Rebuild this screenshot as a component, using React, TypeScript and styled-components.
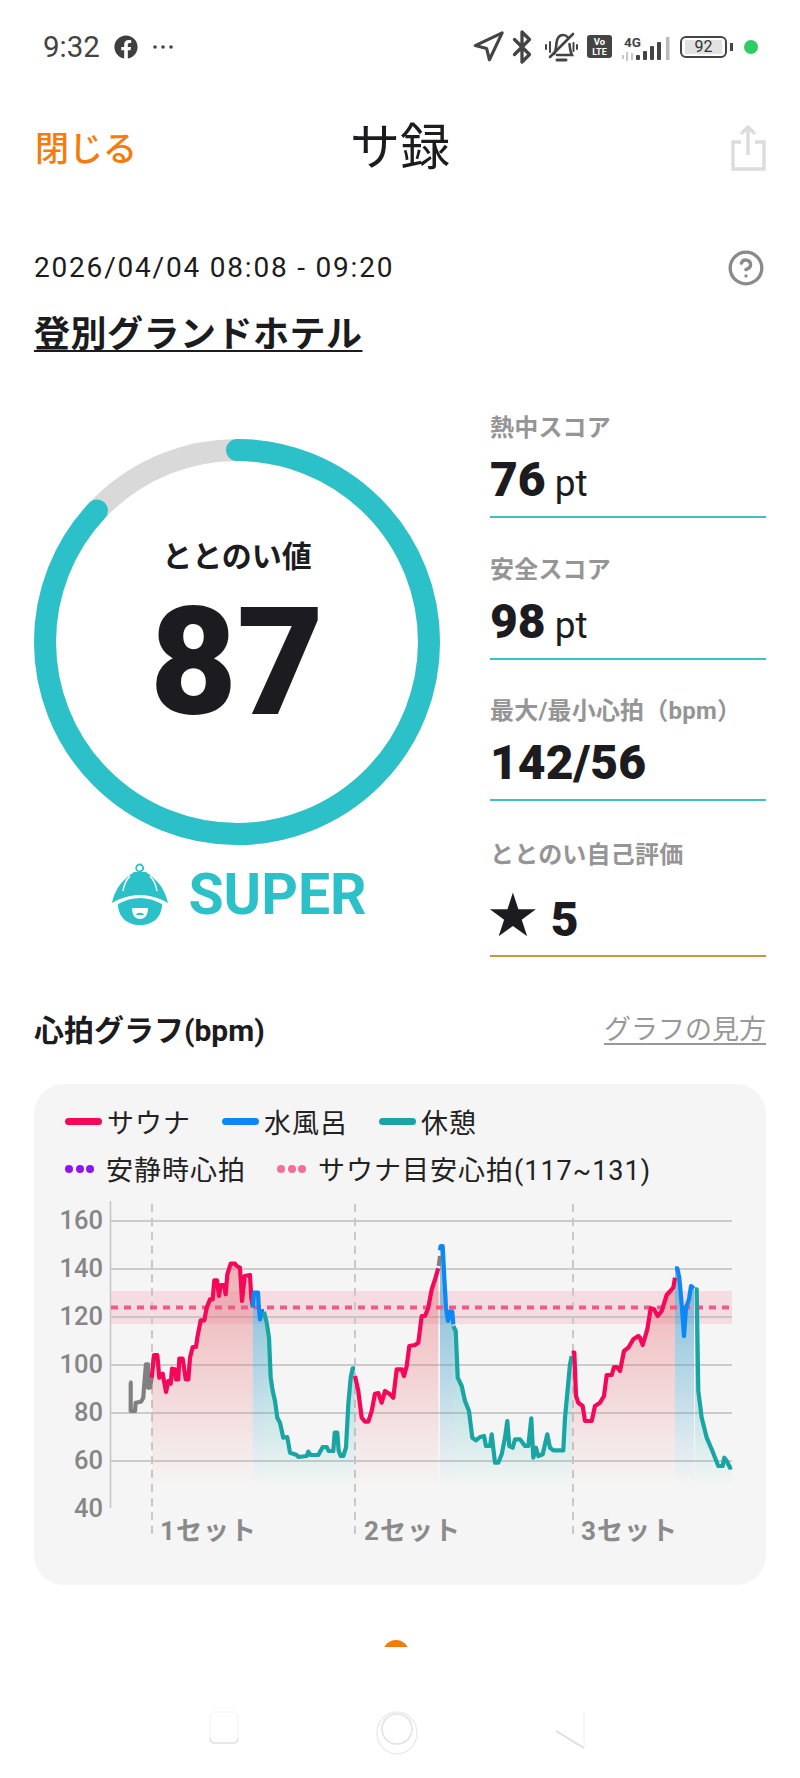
import React from 'react';
import styled, {createGlobalStyle} from 'styled-components';
import {Bluetooth, CircleHelp, Navigation} from 'lucide-react';
import {FaFacebook} from 'react-icons/fa';

const GlobalStyle = createGlobalStyle`
  html, body {
    margin: 0;
    background: #fff;
  }

  body {
    width: 800px;
    height: 1778px;
    overflow: hidden;
    font-family: Roboto, "Noto Sans CJK JP", sans-serif;
    color: #1c1c20;
  }
`;

const TEAL = '#2cc1c8';

type Pt = [number, number];

// traced from the chart; left and right halves were read from separate crops
const L = (pts: Pt[]): Pt[] => pts.map(([x, y]) => [40 + x / 3, 1190 + y / 3]);
const R = (pts: Pt[]): Pt[] => pts.map(([x, y]) => [390 + x / 3, 1190 + y / 3]);

const LINE = {sauna: '#f5075a', water: '#0d87f5', rest: '#1aa5a5', none: '#808080'};
type Kind = keyof typeof LINE;

const segments: { kind: Kind; pts: Pt[] }[] = [
    {kind: 'none', pts: L([[268, 575], [272, 575], [272, 660], [285, 660], [287, 635], [303, 632], [310, 620], [312, 590], [318, 520], [324, 520], [324, 590], [330, 590], [335, 560]])},
    {kind: 'sauna', pts: L([[335, 560], [342, 492], [352, 492], [358, 560], [368, 548], [378, 603], [385, 570], [392, 578], [396, 533], [405, 535], [408, 565], [415, 565], [418, 503], [428, 503], [437, 565], [445, 565], [450, 500], [458, 468], [468, 468], [472, 440], [482, 388], [493, 388], [500, 350], [510, 325], [518, 325], [523, 268], [531, 268], [537, 315], [542, 282], [552, 282], [557, 310], [562, 250], [572, 218], [585, 218], [590, 225], [600, 230], [606, 330], [614, 255], [630, 252], [634, 320], [638, 345]])},
    {kind: 'water', pts: L([[638, 350], [642, 305], [654, 305], [656, 345], [660, 385], [665, 360], [672, 360]])},
    {kind: 'rest', pts: L([[672, 362], [680, 395], [687, 440], [692, 560], [698, 600], [705, 630], [712, 680], [720, 695], [730, 740], [742, 738], [750, 785], [770, 792], [775, 798], [800, 795], [805, 782], [812, 792], [835, 792], [848, 768], [860, 768], [866, 780], [880, 780], [884, 725], [892, 725], [896, 780], [902, 795], [910, 795], [918, 770], [925, 640], [932, 560], [938, 532], [945, 532]])},
    {kind: 'sauna', pts: [...L([[945, 555], [955, 600], [965, 680], [975, 692], [985, 692], [995, 660], [1005, 608], [1015, 606], [1025, 635], [1035, 600]]), ...R([[0, 610], [10, 620], [20, 535], [35, 535], [42, 555], [50, 525], [58, 465], [75, 462], [85, 455], [95, 375], [105, 375], [115, 350], [125, 295], [135, 265], [145, 232]])]},
    {kind: 'none', pts: R([[146, 225], [150, 195]])},
    {kind: 'water', pts: R([[150, 178], [152, 165], [158, 165], [163, 260], [168, 350], [174, 390], [180, 362], [187, 362], [190, 400]])},
    {kind: 'rest', pts: R([[190, 405], [197, 420], [203, 560], [215, 585], [225, 630], [237, 660], [247, 740], [258, 748], [270, 738], [282, 735], [288, 765], [300, 765], [305, 730], [315, 815], [325, 815], [335, 790], [345, 740], [352, 690], [358, 765], [368, 770], [375, 745], [390, 745], [405, 765], [415, 765], [424, 682], [430, 800], [438, 770], [445, 795], [458, 790], [472, 730], [480, 770], [490, 778], [520, 778], [525, 680], [540, 520], [545, 495]])},
    {kind: 'sauna', pts: R([[545, 485], [553, 485], [558, 615], [565, 635], [578, 645], [585, 690], [605, 690], [615, 645], [630, 635], [642, 615], [650, 552], [665, 552], [672, 528], [680, 528], [690, 540], [702, 480], [715, 470], [730, 445], [745, 435], [750, 440], [758, 462], [772, 415], [782, 352], [792, 355], [803, 375], [815, 360], [830, 312], [850, 290], [855, 260]])},
    {kind: 'water', pts: R([[855, 232], [862, 232], [868, 260], [875, 340], [882, 435], [888, 350], [897, 325], [903, 285], [912, 292]])},
    {kind: 'rest', pts: R([[915, 295], [920, 295], [925, 600], [935, 680], [950, 740], [965, 775], [985, 825], [998, 825], [1003, 800], [1010, 810], [1020, 830], [1026, 828]])},
];

const toLine = (pts: Pt[]) => pts.map(([x, y]) => `${x.toFixed(1)},${y.toFixed(1)}`).join(' ');
const toArea = (pts: Pt[]) => {
    const bottom = 1488;
    return `${pts[0][0].toFixed(1)},${bottom} ${toLine(pts)} ${pts[pts.length - 1][0].toFixed(1)},${bottom}`;
};

const grid = [
    {label: '160', y: 1220},
    {label: '140', y: 1268},
    {label: '120', y: 1316},
    {label: '100', y: 1364},
    {label: '80', y: 1412},
    {label: '60', y: 1460},
    {label: '40', y: 1508},
];

const sets = [
    {label: '1セット', x: 152, textX: 160},
    {label: '2セット', x: 355, textX: 364},
    {label: '3セット', x: 573, textX: 581},
];

const HeartChart = () => (
    <ChartSvg viewBox="34 1191 732 393">
        <defs>
            <linearGradient id="area-sauna" gradientUnits="userSpaceOnUse" x1="0" y1="1270" x2="0" y2="1488">
                <stop offset="0" stopColor="#e87078" stopOpacity={0.5}/>
                <stop offset="1" stopColor="#e87078" stopOpacity={0}/>
            </linearGradient>
            <linearGradient id="area-water" gradientUnits="userSpaceOnUse" x1="0" y1="1290" x2="0" y2="1488">
                <stop offset="0" stopColor="#3f9fcb" stopOpacity={0.6}/>
                <stop offset="1" stopColor="#3f9fcb" stopOpacity={0}/>
            </linearGradient>
            <linearGradient id="area-rest" gradientUnits="userSpaceOnUse" x1="0" y1="1300" x2="0" y2="1488">
                <stop offset="0" stopColor="#2aa8b8" stopOpacity={0.55}/>
                <stop offset="1" stopColor="#2ab8b8" stopOpacity={0}/>
            </linearGradient>
        </defs>

        <rect x="111" y="1290" width="621" height="33" fill="#ee7896" fillOpacity={0.2}/>

        {grid.slice(0, 6).map(g => (
            <line key={g.label} x1="111" x2="732" y1={g.y} y2={g.y} stroke="#bcbcbc" strokeWidth="1.6"/>
        ))}
        <line x1="110.5" x2="110.5" y1="1200" y2="1507" stroke="#c8c8c8" strokeWidth="1.6"/>

        {sets.map(s => (
            <line key={s.label} x1={s.x} x2={s.x} y1="1203" y2="1534" stroke="#c9c9c9" strokeWidth="2" strokeDasharray="8 6"/>
        ))}

        {segments.filter(s => s.kind !== 'none').map((s, i) => (
            <polygon key={i} points={toArea(s.pts)} fill={`url(#area-${s.kind})`}/>
        ))}

        <line x1="111" x2="732" y1="1306.5" y2="1306.5" stroke="#ee5b86" strokeWidth="4" strokeDasharray="7 6"/>

        {segments.map((s, i) => (
            <polyline key={i} points={toLine(s.pts)} fill="none" stroke={LINE[s.kind]} strokeWidth="4.2"
                      strokeLinejoin="round"/>
        ))}

        {grid.map(g => (
            <AxisText key={g.label} x="103" y={g.y + 8} textAnchor="end">{g.label}</AxisText>
        ))}
        {sets.map(s => (
            <SetText key={s.label} x={s.textX} y="1539">{s.label}</SetText>
        ))}
    </ChartSvg>
);

const BellMuted = () => (
    <svg width="34" height="30" viewBox="0 0 34 30" fill="none" stroke="#444" strokeWidth="2.6" strokeLinecap="round">
        <path d="M10 22c2-3 2-7 2.500-11 .6-5 3-8 6.500-8 2 0 3.500 .7 4.500 2M25.500 12c.3 4 1 8 2.500 11H13"/>
        <path d="M6 25 29 2"/>
        <path d="M13 28h9" strokeWidth="3"/>
        <path d="M2 13v4M6 10v10M33 13v4M29.500 11v8" strokeWidth="2"/>
    </svg>
);

const VoLte = () => (
    <svg width="25" height="23" viewBox="0 0 25 23">
        <rect width="25" height="23" rx="3" fill="#444"/>
        <IconText x="12.500" y="10" fontSize="9.500" fill="#fff" textAnchor="middle">Vo</IconText>
        <IconText x="12.500" y="20" fontSize="9" fill="#fff" textAnchor="middle">LTE</IconText>
    </svg>
);

const Signal = () => (
    <svg width="50" height="30" viewBox="0 -4 50 30">
        <IconText x="3" y="11" fontSize="13.500" fill="#444">4G</IconText>
        <path d="M2 19v4M6 16v9M11 17v7" stroke="#bbb" strokeWidth="1.600"/>
        <rect x="15" y="19" width="4" height="5" rx="1" fill="#444"/>
        <rect x="22" y="15" width="4" height="9" rx="1" fill="#444"/>
        <rect x="29" y="10" width="4" height="14" rx="1" fill="#444"/>
        <rect x="36" y="6" width="4" height="18" rx="1" fill="#444"/>
        <rect x="45" y="1" width="3.500" height="23" fill="#bbb"/>
    </svg>
);

const MoreDots = () => (
    <svg width="22" height="6" viewBox="0 0 22 6">
        <circle cx="3" cy="3" r="1.800" fill="#444"/>
        <circle cx="11" cy="3" r="1.800" fill="#444"/>
        <circle cx="19" cy="3" r="1.800" fill="#444"/>
    </svg>
);

const ShareIcon = () => (
    <svg width="36" height="46" viewBox="0 0 36 46" fill="none" stroke="#dcdcdc" strokeWidth="3.400">
        <path d="M11 17H3v27h31V17h-9"/>
        <path d="M18 30V3M11 9l7-7 7 7"/>
    </svg>
);

const SuperLogo = () => (
    <svg width="56" height="63" viewBox="0 0 56 63">
        <circle cx="27.700" cy="5" r="3.500" fill="none" stroke={TEAL} strokeWidth="1.800"/>
        <path d="M0 40C4 22 14 15 22 9h12c8 6 18 13 22 31-8-5-19-8-28-8S8 35 0 40Z" fill={TEAL}/>
        <path d="M18 13c-4 4-6 9-7 15M38 13c4 4 6 9 7 15" fill="none" stroke="#fff" strokeWidth="1.500"/>
        <path d="M6 41c7-4 15-6 22-6s15 2 22 6c0 13-9 21-22 21S6 54 6 41Z" fill={TEAL}/>
        <path d="M20 45h16c0 7-3 11-8 11s-8-4-8-11Z" fill="#fff"/>
        <path d="M24 52c1-3 7-3 8 0Z" fill={TEAL}/>
    </svg>
);

const stats = [
    {label: '熱中スコア', value: '76', unit: 'pt'},
    {label: '安全スコア', value: '98', unit: 'pt'},
    {label: '最大/最小心拍（bpm）', value: '142/56'},
];

export default function App() {
    return (
        <Page>
            <GlobalStyle/>
            <StatusBar>
                <StatusGroup>
                    <Clock>9:32</Clock>
                    <FaFacebook size={24} color="#3f3f3f"/>
                    <MoreDots/>
                </StatusGroup>
                <StatusIcons>
                    <NavIcon size={34} color="#444" strokeWidth={2.2}/>
                    <BtIcon size={36} color="#444" strokeWidth={2.2}/>
                    <BellMuted/>
                    <VoLte/>
                    <Signal/>
                    <Battery>
                        <BatteryBody><BatteryLevel>92</BatteryLevel></BatteryBody>
                        <BatteryTip/>
                    </Battery>
                    <GreenDot/>
                </StatusIcons>
            </StatusBar>

            <Header>
                <CloseLink>閉じる</CloseLink>
                <Title>サ録</Title>
                <ShareIcon/>
            </Header>

            <DateRow>
                <DateText>2026/04/04 08:08 - 09:20</DateText>
                <HelpIcon size={38} color="#8a8a8a" strokeWidth={2.1}/>
            </DateRow>
            <HotelName>登別グランドホテル</HotelName>

            <ScoreGrid>
                <ScoreLeft>
                    <RingWrap>
                        <svg width="406" height="406" viewBox="0 0 406 406">
                            <circle cx="203" cy="203" r="192" fill="none" stroke="#d9d9d9" strokeWidth="22"/>
                            <circle cx="203" cy="203" r="192" fill="none" stroke={TEAL} strokeWidth="22"
                                    strokeLinecap="round" pathLength={100} strokeDasharray="87 13"
                                    transform="rotate(-90 203 203)"/>
                        </svg>
                        <RingText>
                            <RingLabel>ととのい値</RingLabel>
                            <RingValue>87</RingValue>
                        </RingText>
                    </RingWrap>
                    <Rank>
                        <SuperLogo/>
                        <RankName>SUPER</RankName>
                    </Rank>
                </ScoreLeft>
                <ScoreRight>
                    {stats.map(s => (
                        <StatRow key={s.label}>
                            <StatLabel>{s.label}</StatLabel>
                            <StatValue>{s.value}{s.unit && <StatUnit>{s.unit}</StatUnit>}</StatValue>
                        </StatRow>
                    ))}
                    <StatRow $self>
                        <StatLabel>ととのい自己評価</StatLabel>
                        <StatValue $spaced><Star>★</Star>5</StatValue>
                    </StatRow>
                </ScoreRight>
            </ScoreGrid>

            <GraphHead>
                <GraphTitle>心拍グラフ(bpm)</GraphTitle>
                <GraphLink>グラフの見方</GraphLink>
            </GraphHead>

            <GraphCard>
                <Legend>
                    <LegendRow>
                        <LegendItem><LegendLine $color={LINE.sauna}/>サウナ</LegendItem>
                        <LegendItem><LegendLine $color="#0d87f5"/>水風呂</LegendItem>
                        <LegendItem><LegendLine $color={LINE.rest}/>休憩</LegendItem>
                    </LegendRow>
                    <LegendRow>
                        <LegendItem $wide><LegendDots $color="#9013f0"><i/><i/><i/></LegendDots>安静時心拍</LegendItem>
                        <LegendItem $wide><LegendDots $color="#f66c9a"><i/><i/><i/></LegendDots>サウナ目安心拍(117~131)</LegendItem>
                    </LegendRow>
                </Legend>
                <HeartChart/>
            </GraphCard>

            <Pager><PagerDot/></Pager>

            <NavBar>
                <svg width="30" height="34" viewBox="0 0 30 34" fill="none">
                    <rect x="1" y="1" width="28" height="31" rx="5" stroke="#f6f6f6" strokeWidth="1.500"/>
                    <path d="M1 27c0 3 2 5 5 5h18c3 0 5-2 5-5" stroke="#e2e2e2" strokeWidth="1.500"/>
                </svg>
                <svg width="42" height="44" viewBox="0 0 42 44" fill="none">
                    <ellipse cx="21" cy="22" rx="20" ry="21" stroke="#ececec" strokeWidth="1.500"/>
                    <ellipse cx="21" cy="18" rx="15" ry="15" stroke="#e2e2e2" strokeWidth="1.500"/>
                </svg>
                <svg width="30" height="38" viewBox="0 0 30 38" fill="none">
                    <path d="M29 1v36" stroke="#f3f3f3" strokeWidth="1.500"/>
                    <path d="M1 20l28 17" stroke="#dedede" strokeWidth="2"/>
                </svg>
            </NavBar>
        </Page>
    );
}

const Page = styled.div`
  width: 800px;
  height: 1778px;
  overflow: hidden;
  background: #fff;
`;

const StatusBar = styled.div`
  height: 92px;
  padding: 1px 42px 0 43px;
  display: flex;
  align-items: center;
  justify-content: space-between;
  box-sizing: border-box;
`;

const StatusGroup = styled.div`
  display: flex;
  align-items: center;
  gap: 14px;
`;

const Clock = styled.span`
  font-size: 29.500px;
  color: #444;
`;

const StatusIcons = styled.div`
  display: flex;
  align-items: center;
  gap: 9px;
`;

const NavIcon = styled(Navigation)`
  margin-right: -8px;
`;

const BtIcon = styled(Bluetooth)`
  margin: 0 -5px 0 -2px;
`;

const HelpIcon = styled(CircleHelp)`
  position: relative;
  top: 1px;
`;

const IconText = styled.text`
  font-family: Roboto, sans-serif;
  font-weight: 700;
`;

const Battery = styled.div`
  display: flex;
  align-items: center;
  gap: 3px;
  margin-right: 1px;
`;

const BatteryBody = styled.div`
  width: 47px;
  height: 22px;
  box-sizing: border-box;
  border: 2px solid #444;
  border-radius: 6px;
  padding: 2px 3px;
  display: flex;
`;

const BatteryLevel = styled.div`
  flex: 1;
  background: #e2e2e2;
  font-size: 16px;
  line-height: 14px;
  text-align: center;
  color: #333;
`;

const BatteryTip = styled.div`
  width: 3px;
  height: 8px;
  background: #444;
`;

const GreenDot = styled.div`
  width: 14px;
  height: 14px;
  border-radius: 50%;
  background: #2ecc67;
  margin-left: 1px;
`;

const Header = styled.header`
  height: 112px;
  display: flex;
  align-items: center;
  justify-content: space-between;
  padding: 0 34px 0 35px;
  position: relative;
`;

const CloseLink = styled.span`
  position: relative;
  top: -2px;
  font-size: 34px;
  font-weight: 500;
  color: #f57c0a;
`;

const Title = styled.h1`
  position: absolute;
  left: 350px;
  margin: 0;
  font-size: 50px;
  font-weight: 400;
  line-height: 60px;
  color: #1c1c20;
`;

const DateRow = styled.div`
  margin-top: 43px;
  height: 40px;
  padding: 0 35px 0 34px;
  display: flex;
  align-items: center;
  justify-content: space-between;
`;

const DateText = styled.span`
  font-size: 28px;
  letter-spacing: 1.800px;
`;

const HotelName = styled.div`
  margin: 24px 0 0 34px;
  height: 44px;
  line-height: 48px;
  font-size: 36px;
  font-weight: 700;
  letter-spacing: 0.500px;
  text-decoration: underline;
  text-decoration-thickness: 2px;
  text-underline-offset: 3px;
`;

const ScoreGrid = styled.section`
  margin-top: 20px;
  padding: 0 34px;
  display: grid;
  grid-template-columns: 406px 276px;
  column-gap: 50px;
`;

const ScoreLeft = styled.div`
  padding-top: 64px;
`;

const RingWrap = styled.div`
  position: relative;
  width: 406px;
  height: 406px;

  svg {
    display: block;
  }
`;

const RingText = styled.div`
  position: absolute;
  inset: 0;
  padding-top: 98px;
  display: flex;
  flex-direction: column;
  align-items: center;
`;

const RingLabel = styled.div`
  font-size: 30px;
  font-weight: 700;
  line-height: 40px;
`;

const RingValue = styled.div`
  margin-top: 11px;
  font-size: 150px;
  font-weight: 900;
  line-height: 150px;
`;

const Rank = styled.div`
  margin-top: 14px;
  height: 70px;
  padding-left: 4px;
  display: flex;
  align-items: center;
  justify-content: center;
  gap: 21px;
`;

const RankName = styled.div`
  font-size: 57px;
  font-weight: 700;
  color: ${TEAL};
`;

const ScoreRight = styled.div`
  padding-top: 35px;
  display: flex;
  flex-direction: column;
  gap: 33.500px;
`;

const StatRow = styled.div<{ $self?: boolean }>`
  padding-bottom: ${p => (p.$self ? '12px' : '8px')};
  border-bottom: 2px solid ${p => (p.$self ? '#cc9444' : '#3fc0c6')};
  margin-top: ${p => (p.$self ? '2px' : 0)};
`;

const StatLabel = styled.div`
  height: 34px;
  line-height: 36px;
  font-size: 24px;
  font-weight: 700;
  letter-spacing: 0.200px;
  color: #959595;
`;

const StatValue = styled.div<{ $spaced?: boolean }>`
  margin-top: ${p => (p.$spaced ? '16px' : '8px')};
  height: 56px;
  line-height: 56px;
  font-size: 48px;
  font-weight: 900;
  display: flex;
  align-items: baseline;
`;

const StatUnit = styled.span`
  margin-left: 9px;
  font-size: 37px;
  font-weight: 400;
`;

const Star = styled.span`
  margin: 0 11px 0 -4px;
  font-size: 60px;
  line-height: 56px;
  font-family: "DejaVu Sans", sans-serif;
  font-weight: 400;
`;

const GraphHead = styled.div`
  margin-top: 51px;
  height: 40px;
  padding: 0 34px;
  display: flex;
  align-items: center;
  justify-content: space-between;
`;

const GraphTitle = styled.h2`
  margin: 0;
  font-size: 30px;
  font-weight: 700;
`;

const GraphLink = styled.span`
  font-size: 27px;
  color: #999;
  text-decoration: underline;
  text-underline-offset: 4px;
`;

const GraphCard = styled.section`
  margin: 36px 34px 0;
  height: 501px;
  box-sizing: border-box;
  padding-top: 19px;
  border-radius: 30px;
  background: #f6f5f5;
`;

const Legend = styled.div`
  padding: 0 0 4px 31px;
  display: flex;
  flex-direction: column;
  gap: 9px;
`;

const LegendRow = styled.div`
  height: 38px;
  display: flex;
  align-items: center;
  gap: 31px;
`;

const LegendItem = styled.div<{ $wide?: boolean }>`
  display: flex;
  align-items: center;
  gap: ${p => (p.$wide ? '12px' : '5px')};
  font-size: 27px;
  letter-spacing: 1px;
  color: #222;
`;

const LegendLine = styled.span<{ $color: string }>`
  width: 37px;
  height: 7px;
  border-radius: 4px;
  background: ${p => p.$color};
`;

const LegendDots = styled.span<{ $color: string }>`
  width: 29px;
  display: flex;
  justify-content: space-between;

  i {
    width: 8px;
    height: 8px;
    border-radius: 50%;
    background: ${p => p.$color};
  }
`;

const ChartSvg = styled.svg`
  display: block;
  width: 732px;
  height: 393px;
`;

const AxisText = styled.text`
  font-size: 25.500px;
  font-weight: 500;
  fill: #868686;
`;

const SetText = styled.text`
  font-size: 26px;
  font-weight: 700;
  letter-spacing: 1px;
  fill: #8a8a8a;
`;

const Pager = styled.div`
  margin: 55px 0 0 383px;
  width: 26px;
  height: 7px;
  overflow: hidden;
`;

const PagerDot = styled.div`
  width: 26px;
  height: 26px;
  border-radius: 50%;
  background: #f07c0c;
`;

const NavBar = styled.nav`
  margin: 64px 0 0 -6px;
  display: flex;
  justify-content: center;
  align-items: flex-start;
  gap: 137px;
`;
